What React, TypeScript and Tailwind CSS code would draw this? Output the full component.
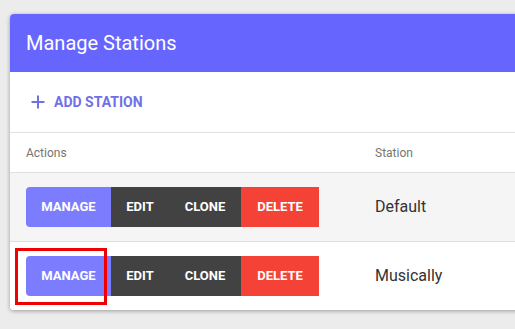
import React from "react";

const font = { fontFamily: "Roboto, 'Liberation Sans', sans-serif" };

function ButtonGroup() {
  return (
    <div className="flex h-[40px] overflow-hidden rounded-[4px] text-[13px] font-bold uppercase text-white">
      <div className="flex w-[85px] items-center justify-center bg-[#7c7cff]">Manage</div>
      <div className="flex w-[58px] items-center justify-center bg-[#424242]">Edit</div>
      <div className="flex w-[72px] items-center justify-center bg-[#424242]">Clone</div>
      <div className="flex w-[78px] items-center justify-center bg-[#f44336]">Delete</div>
    </div>
  );
}

function Row({ name, bg, highlight, last }: { name: string; bg: string; highlight?: boolean; last?: boolean }) {
  return (
    <div className={`relative flex items-center ${bg} ${last ? "h-[68px]" : "h-[69px] border-b border-[#e0e0e0]"}`}>
      <div className="w-[365px] pl-[16px]">
        <ButtonGroup />
      </div>
      <div className="text-[16px] text-[#333333]">{name}</div>
      {highlight && (
        <div className="absolute left-[5px] top-[6px] h-[57px] w-[92px] border-[3px] border-[#f00000]" />
      )}
    </div>
  );
}

export default function App() {
  return (
    <div className="h-[329px] w-[515px] overflow-hidden bg-[#ececec] pt-[14px] pl-[10px]" style={font}>
      <div className="w-[560px] overflow-hidden rounded-[4px] bg-white shadow-[0_1px_4px_rgba(0,0,0,0.35)]">
        <div className="flex h-[58px] items-center bg-[#6666ff] pl-[16px] text-[20px] text-white">
          Manage Stations
        </div>
        <div className="flex h-[61px] items-center border-b border-[#e0e0e0] pl-[20px]">
          <svg width="16" height="16" viewBox="0 0 16 16" className="mr-[8px]">
            <path d="M8 1.5v13M1.5 8h13" stroke="#7070e6" strokeWidth="2" fill="none" />
          </svg>
          <span className="text-[14px] font-bold uppercase text-[#7070e6]">Add Station</span>
        </div>
        <div className="flex h-[40px] items-center border-b border-[#e0e0e0] text-[12px] text-[#757575]">
          <div className="w-[365px] pl-[16px]">Actions</div>
          <div>Station</div>
        </div>
        <Row name="Default" bg="bg-[#f5f5f5]" />
        <Row name="Musically" bg="bg-white" highlight last />
      </div>
    </div>
  );
}
